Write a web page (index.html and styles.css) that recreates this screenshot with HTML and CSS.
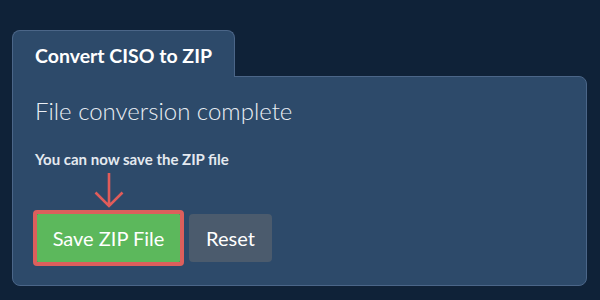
FILE: index.html
```html
<!DOCTYPE html>
<html lang="en">
<head>
  <meta charset="UTF-8">
  <title>Convert CISO to ZIP</title>
  <link rel="stylesheet" href="styles.css">
</head>
<body>
  <div class="tabs">
    <div class="tab active">Convert CISO to ZIP</div>
  </div>
  <section class="panel">
    <h2>File conversion complete</h2>
    <p class="hint">You can now save the ZIP file</p>
    <div class="pointer">
      <svg width="30" height="36" viewBox="0 0 30 36">
        <path d="M15 1 V34 M1.5 20.5 L15 34 L28.5 20.5" fill="none" stroke="#e05c5a" stroke-width="2.6"/>
      </svg>
    </div>
    <div class="actions">
      <span class="highlight"><button class="btn btn-save">Save ZIP File</button></span>
      <button class="btn btn-reset">Reset</button>
    </div>
  </section>
</body>
</html>
```

FILE: styles.css
```css
body {
  margin: 0;
  padding: 30px 13px 0 12px;
  background: #0f2238;
  font-family: Lato, 'Open Sans', sans-serif;
  color: #fff;
}
.tabs {
  display: flex;
}
.tab {
  background: #2d4a6a;
  border: 1px solid #4b6688;
  border-bottom: none;
  border-radius: 8px 8px 0 0;
  padding: 14px 22px 10px 22px;
  line-height: 22px;
  font-size: 19.5px;
  font-weight: 700;
  margin-bottom: -1px;
  position: relative;
  z-index: 1;
}
.panel {
  background: #2d4a6a;
  border: 1px solid #4b6688;
  border-radius: 0 8px 8px 8px;
  padding: 19px 22px 19px 22px;
}
.panel h2 {
  margin: 0;
  font-size: 24px;
  font-weight: 300;
  line-height: 30px;
  color: #e9eef4;
}
.hint {
  margin: 24px 0 0 0;
  font-size: 15px;
  font-weight: 700;
  line-height: 18px;
  color: #e4e9ef;
}
.pointer {
  display: flex;
  width: 151px;
  justify-content: center;
  margin-left: -2px;
  margin-top: 4px;
  height: 36px;
}
.actions {
  display: flex;
  align-items: center;
  gap: 5px;
  margin-top: 2px;
  margin-left: -2px;
}
.highlight {
  display: inline-flex;
  border: 4px solid #dc5f5c;
  border-radius: 4px;
}
.btn {
  border: none;
  font-family: Lato, 'Open Sans', sans-serif;
  font-size: 20px;
  font-weight: 400;
  color: #fff;
  height: 48px;
  padding: 0;
  cursor: pointer;
}
.btn-save {
  background: #5cb85c;
  width: 143px;
  border-radius: 1px;
}
.btn-reset {
  background: #4b5b6d;
  width: 83px;
  border-radius: 4px;
}
```
